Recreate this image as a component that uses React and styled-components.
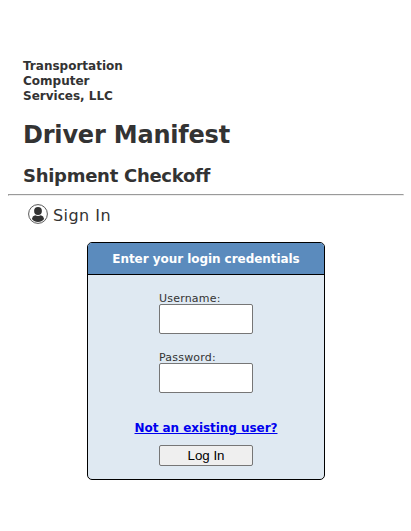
import React from 'react';
import styled, { createGlobalStyle } from 'styled-components';

const GlobalStyle = createGlobalStyle`
  * { box-sizing: border-box; }
  body { margin: 0; background: #fff; color: #333; font-family: Verdana, "DejaVu Sans", sans-serif; }
`;

const Page = styled.main`
  padding: 59px 7px 0 8px;
`;
const Header = styled.header`
  padding-left: 15px;
  font-weight: bold;
`;
const Company = styled.div`
  width: 120px;
  font-size: 12px;
  line-height: 15px;
`;
const Title = styled.h1`
  margin: 16px 0 0;
  font-size: 24px;
  line-height: 30px;
  letter-spacing: -0.2px;
`;
const Subtitle = styled.h2`
  margin: 14px 0 0;
  font-size: 18px;
  line-height: 24px;
  letter-spacing: -0.28px;
`;
const Rule = styled.hr`
  margin: 6px 0 0;
  border: 1px solid;
  border-color: #9a9a9a #eee #eee #9a9a9a;
`;
const SignIn = styled.div`
  display: flex;
  align-items: center;
  gap: 5px;
  height: 22px;
  margin: 7px 0 0 20px;
  font-size: 16px;
  letter-spacing: 0.45px;
`;
const SignInLabel = styled.span`
  padding-top: 2px;
`;
const Card = styled.form`
  width: 238px;
  height: 238px;
  margin: 17px 0 0 79px;
  border: 1px solid #000;
  border-radius: 5px;
  background: #dfe9f2;
  overflow: hidden;
`;
const CardHeader = styled.div`
  height: 32px;
  border-bottom: 1px solid #000;
  background: #5b8bbd;
  color: #fff;
  font-size: 12px;
  font-weight: bold;
  line-height: 32px;
  letter-spacing: -0.05px;
  text-align: center;
`;
const Fields = styled.div`
  width: 94px;
  margin: 17px auto 0;
`;
const Field = styled.label`
  display: block;
  height: 59px;
  font-size: 11px;
  line-height: 14px;
  letter-spacing: 0.2px;
`;
const Input = styled.input`
  display: block;
  width: 94px;
  height: 30px;
  margin: -2px 0 0;
  border: 1px solid #767676;
  border-radius: 2px;
  background: #fff;
`;
const Help = styled.a`
  display: block;
  margin-top: 11px;
  color: #00e;
  font-size: 12px;
  font-weight: bold;
  line-height: 15px;
  letter-spacing: -0.05px;
  text-align: center;
`;
const Submit = styled.button`
  display: block;
  width: 94px;
  height: 21px;
  margin: 9px auto 0;
  padding: 0;
  border: 1px solid #767676;
  border-radius: 2px;
  background: #efefef;
  color: #000;
  font: 13.333px/19px "Liberation Sans", sans-serif;
`;

function UserIcon() {
  return (
    <svg width="20" height="20" viewBox="0 0 20 20">
      <circle cx="10" cy="10" r="9.4" fill="none" stroke="#444" strokeWidth="0.9" />
      <circle cx="10" cy="7" r="3.9" fill="#333" />
      <path d="M3.9 15Q4.2 12 7.1 11.2Q10 12.6 12.9 11.2Q15.8 12 16.1 15Q14 18 10 18T3.9 15Z" fill="#333" />
    </svg>
  );
}

export default function App() {
  return (
    <Page>
      <GlobalStyle />
      <Header>
        <Company>Transportation<br />Computer<br />Services, LLC</Company>
        <Title>Driver Manifest</Title>
        <Subtitle>Shipment Checkoff</Subtitle>
      </Header>
      <Rule />
      <SignIn><UserIcon /><SignInLabel>Sign In</SignInLabel></SignIn>
      <Card>
        <CardHeader>Enter your login credentials</CardHeader>
        <Fields>
          <Field>Username:<Input type="text" /></Field>
          <Field>Password:<Input type="password" /></Field>
        </Fields>
        <Help href="#">Not an existing user?</Help>
        <Submit type="button">Log In</Submit>
      </Card>
    </Page>
  );
}
